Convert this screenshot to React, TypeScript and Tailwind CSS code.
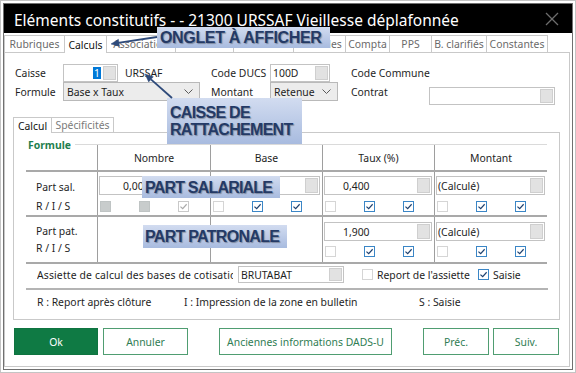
import React from 'react';

type CheckState = 'off' | 'on' | 'grey' | 'greyOn';

// tabs 4 and 5 sit fully under the "ONGLET" callout, so they carry no label
const TABS: { label: string; w: string }[] = [
  { label: 'Rubriques', w: 'w-[61px]' },
  { label: 'Calculs', w: 'w-[42px]' },
  { label: 'Association', w: 'w-[69px]' },
  { label: '', w: 'w-[58px]' },
  { label: '', w: 'w-[60px]' },
  { label: 'Variables', w: 'w-[52px]' },
  { label: 'Compta', w: 'w-[44px]' },
  { label: 'PPS', w: 'w-[42px]' },
  { label: 'B. clarifiés', w: 'w-[55px]' },
  { label: 'Constantes', w: 'w-[61px]' },
];

const COLS = 'grid grid-cols-[71px_113px_112px_112px_113px]';
const CELL = 'border-l border-[#9e9e9e]';

function Check({ state }: { state: CheckState }) {
  if (state === 'grey') {
    return <span className="block h-[11px] w-[11px] shrink-0 border border-[#bfc4c4] bg-[#c8cccc]" />;
  }
  const border =
    state === 'on' ? 'border-[#3b86c6]' : state === 'greyOn' ? 'border-[#c9c9c9]' : 'border-[#d5d5d5]';
  return (
    <span className={`flex h-[11px] w-[11px] shrink-0 items-center justify-center border bg-white ${border}`}>
      {state !== 'off' && (
        <svg viewBox="0 0 10 10" className="h-[9px] w-[9px]">
          <path
            d="M1.6 5.1 4.1 7.5 8.5 2.5"
            fill="none"
            stroke={state === 'on' ? '#1e416f' : '#aaaaaa'}
            strokeWidth="1.3"
          />
        </svg>
      )}
    </span>
  );
}

function Checks({ states }: { states: CheckState[] }) {
  return (
    <div className="ml-[1px] flex gap-[28px]">
      {states.map((s, i) => (
        <Check key={i} state={s} />
      ))}
    </div>
  );
}

function PickButton() {
  return <span className="mr-[1px] h-[calc(100%-2px)] w-[13px] shrink-0 border border-[#cfcfcf] bg-[#e2e2e2]" />;
}

function Field({
  value = '',
  className = '',
  textClass = 'pl-[2px]',
  button = true,
}: {
  value?: string;
  className?: string;
  textClass?: string;
  button?: boolean;
}) {
  return (
    <div className={`flex items-center border border-[#c3c3c3] bg-white ${className}`}>
      <span className={`flex-1 overflow-hidden whitespace-nowrap ${textClass}`}>{value}</span>
      {button && <PickButton />}
    </div>
  );
}

function Select({ value, className = '' }: { value: string; className?: string }) {
  return (
    <div className={`flex items-center border border-[#b9b9b9] bg-[#ececec] pl-[3px] pr-[6px] ${className}`}>
      <span className="flex-1">{value}</span>
      <svg viewBox="0 0 9 5" className="h-[5px] w-[9px]">
        <polyline points="0.5,0.5 4.5,4.5 8.5,0.5" fill="none" stroke="#5a5a5a" strokeWidth="1" />
      </svg>
    </div>
  );
}

function Callout({ className, children }: { className: string; children: React.ReactNode }) {
  return (
    <div
      className={`absolute flex flex-col justify-center bg-linear-to-b from-[#d2dcf0] to-[#a8bbdf] font-['Liberation_Sans',Arial,sans-serif] text-[16px] font-bold leading-[17px] text-[#243a66] [text-shadow:1px_1px_1px_rgba(0,0,0,0.3)] ${className}`}
    >
      {children}
    </div>
  );
}

function Button({ label, className, primary = false }: { label: string; className: string; primary?: boolean }) {
  return (
    <div
      className={`flex h-[27px] items-center justify-center border ${
        primary ? 'border-[#0f7440] bg-[#0f7a44] text-white' : 'border-[#4f9d71] bg-white text-[#2f7d53]'
      } ${className}`}
    >
      {label}
    </div>
  );
}

export default function App() {
  return (
    <div className="relative h-[373px] w-[576px] overflow-hidden bg-white font-['Noto_Sans',sans-serif] text-[10.4px] leading-[14px] text-[#1e1e1e]">
      <div className="h-full border border-[#c4c4c4] p-[2px]">
        <div className="flex h-full flex-col border border-[#707070]">
          <div className="flex h-[29px] shrink-0 items-center bg-black pl-[10px] pt-[2px] text-[15.5px] text-white">
            Eléments constitutifs - - 21300 URSSAF Vieillesse déplafonnée
          </div>

          <div className="mt-[2px] flex h-[17px] shrink-0">
            {TABS.map((t, i) => (
              <div
                key={i}
                className={`flex items-center justify-center overflow-hidden whitespace-nowrap border-t border-r border-[#c9c9c9] ${t.w} ${
                  i === 0 ? 'border-l' : ''
                } ${t.label === 'Calculs' ? 'relative z-10 h-[18px] bg-white text-[#111]' : 'text-[#6a6a6a]'}`}
              >
                {t.label}
              </div>
            ))}
          </div>

          <div className="mb-[2px] mr-[2px] flex-1 border border-[#c9c9c9] pl-[8px] pt-[11px]">
            <div className="flex h-[18px] items-center pl-[2px]">
              <span className="w-[48px]">Caisse</span>
              <div className="flex h-[18px] w-[55px] items-center justify-end border border-[#c3c3c3] bg-white">
                <span className="mr-[2px] bg-[#0078d7] px-[1px] leading-[12px] text-white">1</span>
                <PickButton />
              </div>
              <span className="ml-[7px] w-[86px]">URSSAF</span>
              <span className="w-[59px]">Code DUCS</span>
              <Field value="100D" className="h-[18px] w-[60px]" />
              <span className="ml-[21px]">Code Commune</span>
            </div>

            <div className="flex h-[19px] items-center pl-[2px]">
              <span className="w-[48px]">Formule</span>
              <Select value="Base x Taux" className="h-[19px] w-[137px]" />
              <span className="ml-[11px] w-[59px]">Montant</span>
              <Select value="Retenue" className="h-[19px] w-[68px]" />
              <span className="ml-[13px] w-[78px]">Contrat</span>
              <Field className="mt-[9px] h-[18px] w-[126px]" />
            </div>

            <div className="mt-[16px] flex h-[15px]">
              <div className="relative z-10 flex h-[16px] w-[39px] items-center justify-center border-l border-t border-r border-[#c9c9c9] bg-white text-[#111]">
                Calcul
              </div>
              <div className="flex w-[62px] items-center justify-center border-t border-r border-[#c9c9c9] text-[#7a7a7a]">
                Spécificités
              </div>
            </div>

            <div className="h-[188px] w-[547px] border border-[#c9c9c9] pt-[11px]">
              <div className="relative ml-[12px] w-[521px] border-t border-[#dadada]">
                <span className="absolute -top-[7px] left-0 bg-white pl-[2px] pr-[4px] font-bold text-[#1f7f4f]">
                  Formule
                </span>

                <div className={`${COLS} border-b-2 border-[#a9a9a9]`}>
                  <div className="h-[25px]" />
                  {['Nombre', 'Base', 'Taux (%)', 'Montant'].map(h => (
                    <div key={h} className={`flex h-[25px] items-center justify-center ${CELL}`}>
                      {h}
                    </div>
                  ))}
                </div>

                <div className={`${COLS} border-b-2 border-[#a9a9a9]`}>
                  <div className="flex h-[43px] flex-col gap-[5px] pl-[10px] pt-[8px]">
                    <span>Part sal.</span>
                    <span>R / I / S</span>
                  </div>
                  <div className={`flex flex-col gap-[6px] pl-[1px] pr-[2px] pt-[4px] ${CELL}`}>
                    <Field value="0,000" className="h-[19px]" textClass="pl-[23px]" />
                    <Checks states={['grey', 'grey', 'greyOn']} />
                  </div>
                  <div className={`flex flex-col gap-[6px] pl-[1px] pr-[2px] pt-[4px] ${CELL}`}>
                    <Field className="h-[19px]" />
                    <Checks states={['off', 'on', 'on']} />
                  </div>
                  <div className={`flex flex-col gap-[6px] pl-[1px] pr-[2px] pt-[4px] ${CELL}`}>
                    <Field value="0,400" className="h-[19px]" textClass="pl-[18px]" />
                    <Checks states={['off', 'on', 'on']} />
                  </div>
                  <div className={`flex flex-col gap-[6px] pl-[1px] pr-[2px] pt-[4px] ${CELL}`}>
                    <Field value="(Calculé)" className="h-[19px]" textClass="pl-[1px]" />
                    <Checks states={['off', 'on', 'on']} />
                  </div>
                </div>

                <div className={`${COLS} border-b-2 border-[#a9a9a9]`}>
                  <div className="flex h-[45px] flex-col gap-[3px] pl-[10px] pt-[7px]">
                    <span>Part pat.</span>
                    <span>R / I / S</span>
                  </div>
                  <div className={CELL} />
                  <div className={CELL} />
                  <div className={`flex flex-col gap-[5px] pl-[1px] pr-[2px] pt-[5px] ${CELL}`}>
                    <Field value="1,900" className="h-[19px]" textClass="pl-[18px]" />
                    <Checks states={['off', 'on', 'on']} />
                  </div>
                  <div className={`flex flex-col gap-[5px] pl-[1px] pr-[2px] pt-[5px] ${CELL}`}>
                    <Field value="(Calculé)" className="h-[19px]" textClass="pl-[1px]" />
                    <Checks states={['off', 'on', 'on']} />
                  </div>
                </div>
              </div>

              <div className="mt-[2px] flex h-[17px] items-center pl-[23px]">
                <span className="w-[196px] overflow-hidden whitespace-nowrap tracking-[0.15px]">
                  Assiette de calcul des bases de cotisation
                </span>
                <Field value="BRUTABAT" className="ml-[5px] h-[17px] w-[106px]" />
                <span className="ml-[18px]">
                  <Check state="off" />
                </span>
                <span className="ml-[4px] w-[101px] whitespace-nowrap">Report de l'assiette</span>
                <Check state="on" />
                <span className="ml-[4px]">Saisie</span>
              </div>

              <div className="ml-[12px] mt-[5px] h-[2px] w-[522px] bg-[#b4b4b4]" />

              <div className="mt-[5px] flex pl-[23px]">
                <span className="w-[147px]">R : Report après clôture</span>
                <span className="w-[235px]">I : Impression de la zone en bulletin</span>
                <span>S : Saisie</span>
              </div>
            </div>

            <div className="mt-[8px] flex">
              <Button label="Ok" primary className="ml-[1px] w-[84px]" />
              <Button label="Annuler" className="ml-[5px] w-[85px]" />
              <Button label="Anciennes informations DADS-U" className="ml-[31px] w-[173px]" />
              <Button label="Préc." className="ml-[31px] w-[66px]" />
              <Button label="Suiv." className="ml-[4px] w-[66px]" />
            </div>
          </div>
        </div>
      </div>

      <Callout className="left-[157px] top-[27px] h-[21px] w-[173px] pl-[3px] tracking-[-0.35px]">
        ONGLET À AFFICHER
      </Callout>
      <Callout className="left-[167px] top-[98px] h-[46px] w-[135px] pl-[3px] tracking-[-0.7px]">
        <span>CAISSE DE</span>
        <span>RATTACHEMENT</span>
      </Callout>
      <Callout className="left-[142px] top-[176px] h-[22px] w-[138px] pl-[3px] tracking-[-0.8px]">
        PART SALARIALE
      </Callout>
      <Callout className="left-[143px] top-[225px] h-[23px] w-[144px] pl-[2px] tracking-[-0.7px]">
        PART PATRONALE
      </Callout>

      <svg className="pointer-events-none absolute left-0 top-0 h-[373px] w-[576px]" viewBox="0 0 576 373">
        <g stroke="#6d6d6d" strokeWidth="1.2">
          <line x1="546" y1="13" x2="558" y2="25" />
          <line x1="558" y1="13" x2="546" y2="25" />
        </g>
        <g stroke="#2e4a7a" strokeWidth="1.8" fill="#2e4a7a">
          <line x1="157" y1="37" x2="118" y2="42.8" />
          <polygon points="111,44 119.4,46.2 118.4,39.3" strokeWidth="0.5" />
          <line x1="172" y1="98" x2="151" y2="79.3" />
          <polygon points="145,74 153.3,76.7 148.7,81.9" strokeWidth="0.5" />
        </g>
      </svg>
    </div>
  );
}
